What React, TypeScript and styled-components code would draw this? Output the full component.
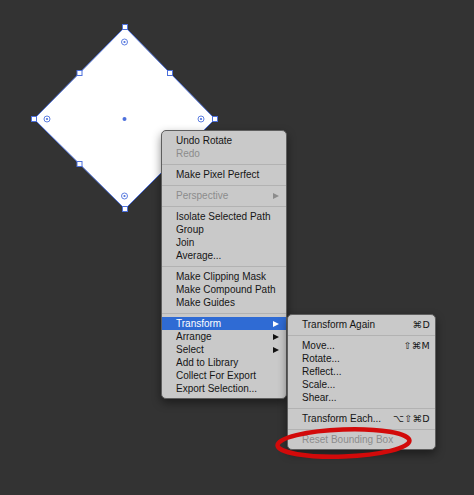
import React from "react";
import styled, { createGlobalStyle } from "styled-components";

const GlobalStyle = createGlobalStyle`
  html, body { margin: 0; padding: 0; background: #333333; }
  * { box-sizing: border-box; }
`;

const Stage = styled.div`
  position: relative;
  width: 474px;
  height: 495px;
  background: #333333;
  overflow: hidden;
  font-family: "Liberation Sans", "DejaVu Sans", Arial, sans-serif;
`;

const Canvas = styled.svg`
  position: absolute;
  left: 0;
  top: 0;
`;

const Menu = styled.div<{ $left: number; $top: number; $width: number }>`
  position: absolute;
  left: ${(p) => p.$left}px;
  top: ${(p) => p.$top}px;
  width: ${(p) => p.$width}px;
  display: flex;
  flex-direction: column;
  padding: 3px 0 3px;
  background: #c9c9c9;
  border: 1px solid #5e5e5e;
  border-radius: 5px;
  box-shadow: 0 4px 10px rgba(0, 0, 0, 0.45);
`;

const Item = styled.div<{ $disabled?: boolean; $active?: boolean; $padL: number; $padR: number }>`
  display: flex;
  align-items: center;
  justify-content: space-between;
  height: 13px;
  padding: 0 ${(p) => p.$padR}px 0 ${(p) => p.$padL}px;
  font-size: 10px;
  line-height: 13px;
  white-space: nowrap;
  color: ${(p) => (p.$active ? "#ffffff" : p.$disabled ? "#8c8c8c" : "#151515")};
  background: ${(p) => (p.$active ? "#2f6bd4" : "transparent")};
`;

const Label = styled.span``;

const Shortcut = styled.span`
  font-family: "DejaVu Sans", "Liberation Sans", sans-serif;
  font-size: 9.5px;
  letter-spacing: 0.3px;
`;

const Arrow = styled.span<{ $color: string }>`
  width: 0;
  height: 0;
  border-top: 3.5px solid transparent;
  border-bottom: 3.5px solid transparent;
  border-left: 6px solid ${(p) => p.$color};
`;

const Separator = styled.div`
  height: 8px;
  display: flex;
  align-items: center;
  &::after {
    content: "";
    flex: 1;
    height: 1px;
    background: #b2b2b2;
  }
`;

type Entry =
  | { sep: true }
  | { label: string; disabled?: boolean; active?: boolean; arrow?: boolean; shortcut?: string };

const mainMenu: Entry[] = [
  { label: "Undo Rotate" },
  { label: "Redo", disabled: true },
  { sep: true },
  { label: "Make Pixel Perfect" },
  { sep: true },
  { label: "Perspective", disabled: true, arrow: true },
  { sep: true },
  { label: "Isolate Selected Path" },
  { label: "Group" },
  { label: "Join" },
  { label: "Average..." },
  { sep: true },
  { label: "Make Clipping Mask" },
  { label: "Make Compound Path" },
  { label: "Make Guides" },
  { sep: true },
  { label: "Transform", active: true, arrow: true },
  { label: "Arrange", arrow: true },
  { label: "Select", arrow: true },
  { label: "Add to Library" },
  { label: "Collect For Export" },
  { label: "Export Selection..." },
];

const subMenu: Entry[] = [
  { label: "Transform Again", shortcut: "⌘D" },
  { sep: true },
  { label: "Move...", shortcut: "⇧⌘M" },
  { label: "Rotate..." },
  { label: "Reflect..." },
  { label: "Scale..." },
  { label: "Shear..." },
  { sep: true },
  { label: "Transform Each...", shortcut: "⌥⇧⌘D" },
  { sep: true },
  { label: "Reset Bounding Box", disabled: true },
];

function renderEntries(entries: Entry[], padL: number, padR: number) {
  return entries.map((e, i) => {
    if ("sep" in e) return <Separator key={i} />;
    const arrowColor = e.active ? "#ffffff" : e.disabled ? "#8c8c8c" : "#111111";
    return (
      <Item key={i} $disabled={e.disabled} $active={e.active} $padL={padL} $padR={padR}>
        <Label>{e.label}</Label>
        {e.arrow && <Arrow $color={arrowColor} />}
        {e.shortcut && <Shortcut>{e.shortcut}</Shortcut>}
      </Item>
    );
  });
}

const blue = "#4d70dc";

function Handle({ x, y }: { x: number; y: number }) {
  return <rect x={x - 2.5} y={y - 2.5} width={5} height={5} fill="#ffffff" stroke={blue} strokeWidth={1} />;
}

function Anchor({ x, y }: { x: number; y: number }) {
  return (
    <g>
      <circle cx={x} cy={y} r={3} fill="#ffffff" stroke={blue} strokeWidth={0.9} />
      <circle cx={x} cy={y} r={1.1} fill={blue} />
    </g>
  );
}

export default function App() {
  return (
    <>
      <GlobalStyle />
      <Stage>
        <Canvas width={474} height={495} viewBox="0 0 474 495">
          <polygon
            points="125,27 215,119 125,209 34,119"
            fill="#ffffff"
            stroke={blue}
            strokeWidth={1}
          />
          <Handle x={125} y={27} />
          <Handle x={34} y={119} />
          <Handle x={215} y={119} />
          <Handle x={125} y={209} />
          <Handle x={79.5} y={73} />
          <Handle x={170} y={73} />
          <Handle x={79.5} y={164} />
          <Handle x={170} y={164} />
          <Anchor x={124.5} y={42} />
          <Anchor x={47} y={119} />
          <Anchor x={201} y={119} />
          <Anchor x={124.5} y={196} />
          <circle cx={124.5} cy={119} r={2} fill={blue} />
        </Canvas>

        <Menu $left={161} $top={130} $width={126}>
          {renderEntries(mainMenu, 14, 7)}
        </Menu>

        <Menu $left={287} $top={314} $width={149}>
          {renderEntries(subMenu, 14, 5)}
        </Menu>

        <Canvas width={474} height={495} viewBox="0 0 474 495">
          <ellipse
            cx={343.5}
            cy={443}
            rx={66}
            ry={13.5}
            fill="none"
            stroke="#d20a0a"
            strokeWidth={4.5}
            transform="rotate(-2 343.5 443)"
          />
        </Canvas>
      </Stage>
    </>
  );
}
